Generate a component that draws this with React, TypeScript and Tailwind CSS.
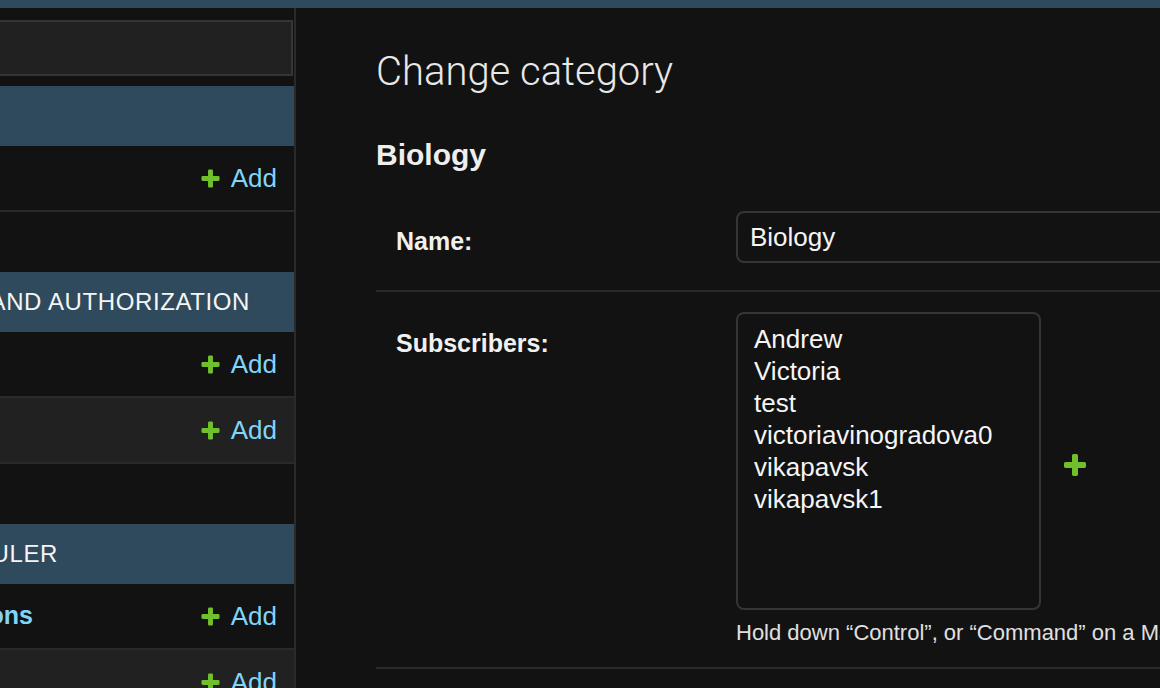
import React from "react";

const PLUS_D =
  "M1600 796v192q0 40-28 68t-68 28h-416v416q0 40-28 68t-68 28h-192q-40 0-68-28t-28-68v-416h-416q-40 0-68-28t-28-68v-192q0-40 28-68t68-28h416v-416q0-40 28-68t68-28h192q40 0 68 28t28 68v416h416q40 0 68 28t28 68z";

function Plus({ size }: { size: number }) {
  return (
    <svg width={size} height={size} viewBox="0 0 1792 1792" className="shrink-0">
      <path fill="#70bf2b" d={PLUS_D} />
    </svg>
  );
}

function Caption({ text, end }: { text?: string; end: number }) {
  return (
    <div className="h-[60px] bg-[#2f4a5c] flex items-center">
      {text ? (
        <div
          className="overflow-hidden flex justify-end whitespace-nowrap"
          style={{ width: end }}
        >
          <span className="shrink-0 text-[24px] tracking-[0.6px] text-[#f5f5f5] uppercase">
            {text}
          </span>
        </div>
      ) : null}
    </div>
  );
}

function Row({ name, end, alt }: { name?: string; end?: number; alt?: boolean }) {
  return (
    <div
      className={`h-[66px] border-b-2 border-[#2a2a2a] flex items-center ${
        alt ? "bg-[#212121]" : "bg-[#121212]"
      }`}
    >
      {name ? (
        <div
          className="overflow-hidden flex justify-end whitespace-nowrap"
          style={{ width: end }}
        >
          <a className="shrink-0 text-[25px] font-bold text-[#81d4fa]">{name}</a>
        </div>
      ) : null}
      <a className="ml-auto mr-[17px] flex items-center gap-[9px] text-[26px] text-[#81d4fa]">
        <Plus size={23} />
        Add
      </a>
    </div>
  );
}

export default function App() {
  const users = ["Andrew", "Victoria", "test", "victoriavinogradova0", "vikapavsk", "vikapavsk1"];
  return (
    <div className="w-[1160px] h-[688px] overflow-hidden bg-[#121212] text-[#eeeeee] font-['Liberation_Sans',Arial,sans-serif]">
      <div className="h-[8px] bg-[#2f4a5c]" />
      <div className="flex h-[680px]">
        <aside className="w-[296px] shrink-0 border-r-2 border-[#2a2a2a] overflow-hidden pt-[12px]">
          <div className="h-[56px] ml-[-10px] mr-[1px] border-2 border-[#353535] bg-[#212121]" />
          <div className="mt-[10px]">
            <Caption end={0} />
            <Row />
          </div>
          <div className="mt-[60px]">
            <Caption text="Authentication and Authorization" end={250} />
            <Row />
            <Row alt />
          </div>
          <div className="mt-[60px]">
            <Caption text="Django APScheduler" end={58} />
            <Row name="Django job executions" end={33} />
            <Row alt />
          </div>
        </aside>
        <main className="flex-1 min-w-0 pl-[80px] pt-[40px]">
          <h1 className="font-['Roboto',sans-serif] font-light text-[40px] leading-[48px] text-[#e8e8e8]">
            Change category
          </h1>
          <h2 className="mt-[41px] text-[30px] leading-[36px] font-bold text-[#eeeeee]">
            Biology
          </h2>
          <div className="mt-[18px] w-[900px]">
            <div className="flex pl-[20px] pt-[20px] pb-[27px] border-b-2 border-[#2a2a2a]">
              <label className="w-[340px] shrink-0 pt-[16px] text-[25px] leading-[28px] font-bold text-[#f0f0f0]">
                Name:
              </label>
              <div className="flex-1 h-[52px] rounded-[8px] border-2 border-[#353535] bg-[#121212] flex items-center px-[12px] text-[26px] text-[#f5f5f5]">
                Biology
              </div>
            </div>
            <div className="flex pl-[20px] pt-[20px] pb-[21px] border-b-2 border-[#2a2a2a]">
              <label className="w-[340px] shrink-0 pt-[17px] text-[25px] leading-[28px] font-bold text-[#f0f0f0]">
                Subscribers:
              </label>
              <div className="flex-1">
                <div className="flex items-center">
                  <div className="w-[305px] h-[298px] rounded-[8px] border-2 border-[#353535] bg-[#121212] pt-[9px] pl-[16px]">
                    {users.map((u) => (
                      <div key={u} className="text-[26px] leading-[32px] text-[#f5f5f5]">
                        {u}
                      </div>
                    ))}
                  </div>
                  <div className="ml-[20px] mt-[8px]">
                    <Plus size={28} />
                  </div>
                </div>
                <div className="mt-[10px] text-[22px] leading-[26px] text-[#e0e0e0] whitespace-nowrap">
                  Hold down “Control”, or “Command” on a Mac, to select more than one.
                </div>
              </div>
            </div>
          </div>
        </main>
      </div>
    </div>
  );
}
